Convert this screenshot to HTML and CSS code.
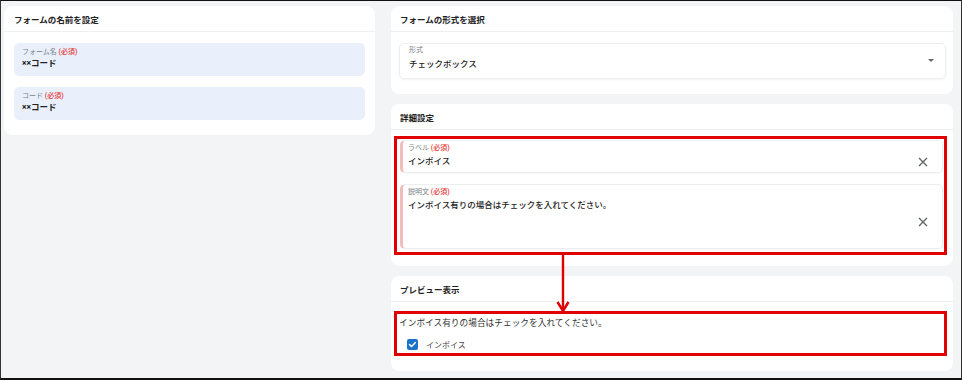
FILE: index.html
```html
<!DOCTYPE html>
<html lang="ja">
<head>
<meta charset="utf-8">
<link rel="stylesheet" href="styles.css">
</head>
<body>
<div class="frame">
  <section class="card left-card">
    <div class="card-head">フォームの名前を設定</div>
    <div class="card-body left-body">
      <div class="fill-field">
        <div class="f-label">フォーム名 <span class="req">(必須)</span></div>
        <div class="f-value bold">××コード</div>
      </div>
      <div class="fill-field">
        <div class="f-label">コード <span class="req">(必須)</span></div>
        <div class="f-value bold">××コード</div>
      </div>
    </div>
  </section>

  <div class="right-col">
    <section class="card">
      <div class="card-head">フォームの形式を選択</div>
      <div class="card-body type-body">
        <div class="select-box">
          <div class="select-text">
            <div class="f-label">形式</div>
            <div class="f-value">チェックボックス</div>
          </div>
          <span class="caret"></span>
        </div>
      </div>
    </section>

    <section class="card">
      <div class="card-head">詳細設定</div>
      <div class="card-body detail-body">
        <div class="red-box detail-box">
          <div class="out-field">
            <div class="f-label">ラベル <span class="req">(必須)</span></div>
            <div class="out-row">
              <div class="f-value">インボイス</div>
              <svg class="clear" width="10" height="10" viewBox="0 0 10 10"><path d="M1 1L9 9M9 1L1 9" stroke="#5f6368" stroke-width="1.3" fill="none"/></svg>
            </div>
          </div>
          <div class="out-field">
            <div class="f-label">説明文 <span class="req">(必須)</span></div>
            <div class="out-row tall">
              <div class="f-value top">インボイス有りの場合はチェックを入れてください。</div>
              <svg class="clear" width="10" height="10" viewBox="0 0 10 10"><path d="M1 1L9 9M9 1L1 9" stroke="#5f6368" stroke-width="1.3" fill="none"/></svg>
            </div>
          </div>
        </div>
      </div>
    </section>

    <section class="card">
      <div class="card-head">プレビュー表示</div>
      <div class="card-body preview-body">
        <div class="red-box preview-box">
          <div class="preview-text">インボイス有りの場合はチェックを入れてください。</div>
          <div class="check-row">
            <span class="checkbox">
              <svg width="11" height="11" viewBox="0 0 11 11"><path d="M2.6 5.6L4.6 7.5L8.4 3.5" stroke="#fff" stroke-width="1.5" fill="none" stroke-linecap="round" stroke-linejoin="round"/></svg>
            </span>
            <span class="check-label">インボイス</span>
          </div>
        </div>
      </div>
    </section>
  </div>

  <svg class="arrow" width="14" height="60" viewBox="0 0 14 60">
    <path d="M7 0V55" stroke="#e00000" stroke-width="2.4" fill="none"/>
    <path d="M1.5 48L7 57L12.5 48" stroke="#e00000" stroke-width="2.4" fill="none" stroke-linejoin="miter"/>
  </svg>
</div>
</body>
</html>
```

FILE: styles.css
```css
* { box-sizing: border-box; }

html, body {
  margin: 0;
  padding: 0;
}

body {
  font-family: Roboto, "Noto Sans CJK JP", sans-serif;
  color: #222;
}

.frame {
  position: relative;
  width: 962px;
  height: 380px;
  background: #f3f4f6;
  border-top: 1px solid #111;
  border-left: 1px solid #333;
  border-right: 1px solid #333;
  border-bottom: 2px solid #111;
  display: flex;
  align-items: flex-start;
  gap: 16px;
  padding: 5px 8px 0 3px;
}

.card {
  background: #fff;
  border-radius: 8px;
  box-shadow: 0 0 1px rgba(0, 0, 0, 0.04);
}

.left-card {
  width: 371px;
}

.right-col {
  width: 562px;
  display: flex;
  flex-direction: column;
  gap: 10px;
}

.card-head {
  height: 26px;
  display: flex;
  align-items: center;
  padding: 0 9px;
  border-bottom: 1px solid #eef0f2;
  font-size: 8.5px;
  font-weight: 700;
  color: #222;
}

.left-card .card-head {
  padding-left: 10px;
}

.left-body {
  padding: 11px 10px 15px;
  display: flex;
  flex-direction: column;
  gap: 11px;
}

.fill-field {
  background: #e9f0fc;
  border-radius: 5px;
  padding: 4px 8px 6px;
}

.f-label {
  font-size: 7px;
  line-height: 10px;
  color: #7a7f87;
}

.req {
  color: #e53935;
  font-weight: 500;
}

.f-value {
  font-size: 8.5px;
  line-height: 13px;
  color: #222;
  font-weight: 500;
}

.f-value.bold {
  font-weight: 700;
}

.type-body {
  padding: 11px 7px 15px 8px;
}

.select-box {
  height: 36px;
  border: 1px solid #eceef1;
  border-radius: 5px;
  box-shadow: 0 1px 2px rgba(0, 0, 0, 0.05);
  display: flex;
  align-items: center;
  padding: 1px 11px 6px 9px;
}

.select-text {
  flex: 1;
  display: flex;
  flex-direction: column;
  gap: 3px;
}

.select-text .f-label {
  line-height: 9px;
}

.caret {
  width: 0;
  height: 0;
  border-left: 3px solid transparent;
  border-right: 3px solid transparent;
  border-top: 3px solid #666;
  margin-top: 4px;
}

.detail-body {
  padding: 6px 6px 11px 3px;
}

.red-box {
  border: 3px solid #e00000;
}

.detail-box {
  padding: 1px 1px 3px 3px;
  display: flex;
  flex-direction: column;
  gap: 11px;
}

.out-field {
  background: #fff;
  border: 1px solid #eceef1;
  border-left: 3px solid #f2bcbc;
  border-radius: 5px;
  padding: 3px 14px 4px 5px;
  box-shadow: 0 1px 1px rgba(0, 0, 0, 0.03);
}

.out-field .f-label {
  line-height: 9px;
}

.out-row {
  margin-top: 2px;
  display: flex;
  align-items: center;
  justify-content: space-between;
}

.out-row.tall {
  height: 45px;
}

.f-value.top {
  align-self: flex-start;
}

.clear {
  flex: none;
  display: block;
}

.preview-body {
  padding: 9px 6px 15px 3px;
}

.preview-box {
  padding: 3px 2px;
  display: flex;
  flex-direction: column;
  gap: 8px;
}

.preview-text {
  font-size: 8.7px;
  line-height: 13px;
  color: #333;
}

.check-row {
  display: flex;
  align-items: center;
  height: 12px;
  padding-left: 8px;
  gap: 8px;
}

.checkbox {
  width: 11px;
  height: 11px;
  border-radius: 2px;
  background: #1a73c8;
  display: flex;
}

.check-label {
  font-size: 8px;
  color: #444;
}

.arrow {
  position: absolute;
  left: 555px;
  top: 253px;
}
```
